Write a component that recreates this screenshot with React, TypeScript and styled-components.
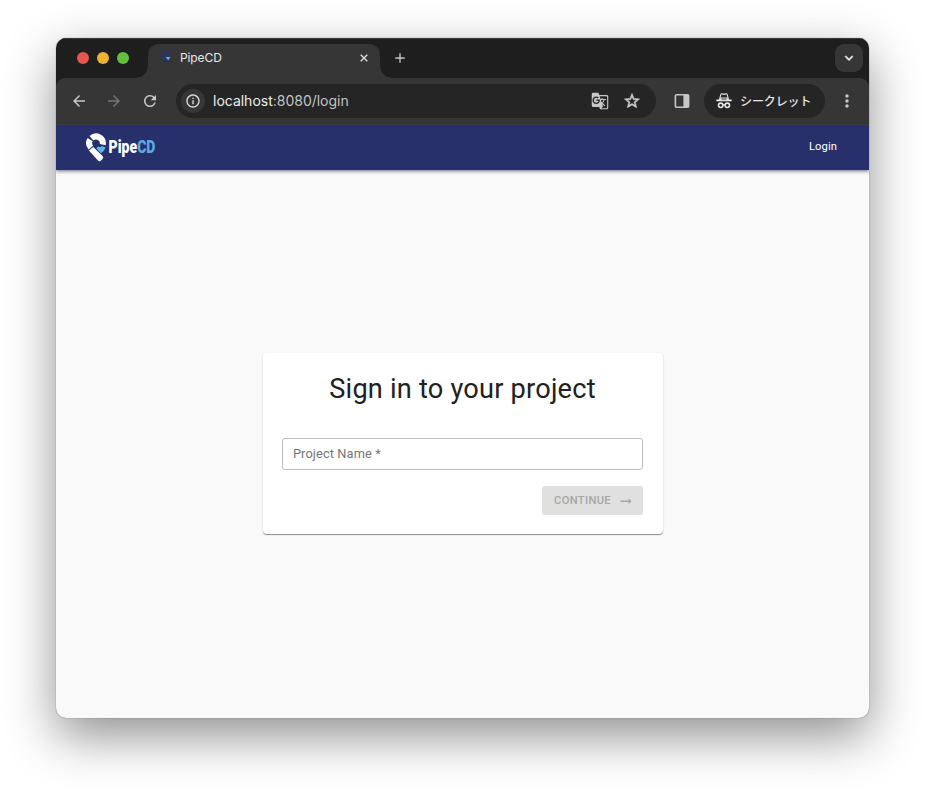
import React from "react";
import styled, { createGlobalStyle, css } from "styled-components";
import {
  MdArrowBack,
  MdArrowForward,
  MdRefresh,
  MdInfoOutline,
  MdGTranslate,
  MdStarBorder,
  MdMoreVert,
  MdClose,
  MdAdd,
  MdKeyboardArrowDown,
} from "react-icons/md";

const GlobalStyle = createGlobalStyle`
  *, *::before, *::after { box-sizing: border-box; }
  body { margin: 0; background: #fff; overflow: hidden; }
`;

const Desktop = styled.div`
  width: 925px;
  height: 792px;
  padding: 38px 56px 74px;
  overflow: hidden;
  background: #fff;
`;

const BrowserWindow = styled.div`
  width: 813px;
  height: 680px;
  display: flex;
  flex-direction: column;
  overflow: hidden;
  border-radius: 10px;
  background: #f9f9f9;
  box-shadow: 0 0 1px 0 rgba(0, 0, 0, 0.7), 0 18px 50px rgba(0, 0, 0, 0.44);
`;

const TabStrip = styled.div`
  height: 40px;
  flex: none;
  display: flex;
  align-items: flex-start;
  padding: 6px 6px 0 21px;
  background: #1e1e1e;
  box-shadow: inset 0 1px 0 #3a3a3a;
  font-family: Inter, sans-serif;
`;

const TrafficLights = styled.div`
  display: flex;
  gap: 8px;
  padding-top: 8px;
  margin-right: 19px;
`;

const Light = styled.span<{ $color: string }>`
  width: 12px;
  height: 12px;
  border-radius: 50%;
  background: ${(p) => p.$color};
`;

const Tab = styled.div`
  position: relative;
  width: 232px;
  height: 34px;
  display: flex;
  align-items: center;
  padding: 0 10px 6px 12px;
  border-radius: 10px 10px 0 0;
  background: #363636;
  color: #e6e6e6;
  font-size: 12px;

  &::before,
  &::after {
    content: "";
    position: absolute;
    bottom: 0;
    width: 12px;
    height: 12px;
  }
  &::before {
    left: -12px;
    background: radial-gradient(circle at 0 0, transparent 11.5px, #363636 12px);
  }
  &::after {
    right: -12px;
    background: radial-gradient(circle at 100% 0, transparent 11.5px, #363636 12px);
  }
`;

const TabTitle = styled.span`
  flex: 1;
  margin-left: 8px;
  padding-bottom: 1px;
  letter-spacing: -0.1px;
`;

const Glyph = styled.span<{ $size: number; $color?: string; $gap?: number }>`
  display: flex;
  flex: none;
  margin-left: ${(p) => p.$gap ?? 0}px;
  color: ${(p) => p.$color ?? "#c7c7c7"};
  svg {
    display: block;
    width: ${(p) => p.$size}px;
    height: ${(p) => p.$size}px;
  }
`;

const BoldGlyph = styled(Glyph)`
  path:not([fill="none"]) {
    stroke-width: 0.9px;
    stroke: currentColor;
  }
`;

const NewTab = styled.div`
  height: 28px;
  display: flex;
  align-items: center;
  margin-left: 12px;
`;

const TabSearch = styled.div`
  width: 28px;
  height: 28px;
  display: flex;
  align-items: center;
  justify-content: center;
  margin-left: auto;
  border-radius: 9px;
  background: #363636;
`;

const ToolbarBack = styled.div`
  flex: none;
  background: #1e1e1e;
`;

const Toolbar = styled.div`
  height: 47px;
  display: flex;
  align-items: center;
  padding: 0 12px 0 14px;
  border-bottom: 1px solid #41423d;
  border-radius: 9px 9px 0 0;
  background: #363636;
  font-family: Inter, sans-serif;
`;

const pill = css`
  height: 34px;
  flex: none;
  display: flex;
  align-items: center;
  border-radius: 17px;
  background: #252525;
`;

const AddressBar = styled.div`
  ${pill}
  width: 480px;
  margin-left: 17px;
  padding: 0 15px 0 5px;
`;

const SiteInfo = styled.span`
  width: 24px;
  height: 24px;
  display: flex;
  align-items: center;
  justify-content: center;
  border-radius: 50%;
  background: #363636;
`;

const Url = styled.span`
  flex: 1;
  margin-left: 8px;
  padding-bottom: 2px;
  color: #c4c4c4;
  font-size: 14px;
  letter-spacing: -0.01px;
  b {
    color: #ececec;
    font-weight: 400;
  }
`;

const Incognito = styled.div`
  ${pill}
  width: 121px;
  margin-left: 14px;
  padding-left: 12px;
  color: #e6e6e6;
  font-family: "Noto Sans CJK JP", sans-serif;
  font-size: 12px;
  font-weight: 500;
`;

const IncognitoLabel = styled.span`
  margin-left: 8px;
  padding-bottom: 2px;
  letter-spacing: -0.1px;
  white-space: nowrap;
`;

const AppBar = styled.header`
  position: relative;
  height: 45px;
  flex: none;
  display: flex;
  align-items: center;
  justify-content: space-between;
  padding: 0 32px 0 29px;
  background: #28306b;
  box-shadow: 0 1px 3px rgba(0, 0, 0, 0.35), 0 2px 4px rgba(0, 0, 0, 0.2);
`;

const Logo = styled.div`
  display: flex;
  align-items: center;
`;

const LoginLink = styled.a`
  margin-top: -2px;
  color: #fff;
  font-family: Roboto, sans-serif;
  font-size: 11.2px;
  letter-spacing: 0.1px;
`;

const Main = styled.main`
  flex: 1;
  display: flex;
  flex-direction: column;
  align-items: center;
  padding-top: 183px;
  font-family: Roboto, sans-serif;
`;

const Card = styled.section`
  width: 400px;
  height: 181px;
  display: flex;
  flex-direction: column;
  padding: 19px 20px 19px 19px;
  border-radius: 4px;
  background: #fff;
  box-shadow: 0 1px 0.5px rgba(0, 0, 0, 0.3), 0 1px 2px rgba(0, 0, 0, 0.18);
`;

const Title = styled.h1`
  margin: 0;
  padding-left: 1px;
  height: 34px;
  color: #212121;
  font-size: 27.2px;
  font-weight: 400;
  line-height: 34px;
  letter-spacing: 0.2px;
  text-align: center;
  white-space: nowrap;
`;

const Field = styled.div`
  height: 32px;
  display: flex;
  align-items: center;
  margin-top: 32px;
  padding: 0 10.4px 1px;
  border: 1px solid #bdbdbd;
  border-radius: 3px;
  color: #757575;
  font-size: 12.8px;
  letter-spacing: 0.12px;
`;

const ContinueButton = styled.button`
  width: 101px;
  height: 29px;
  display: flex;
  align-items: center;
  align-self: flex-end;
  margin-top: 16px;
  padding: 0 11px 0 12.6px;
  border: 0;
  border-radius: 3px;
  background: #e0e0e0;
  color: #a6a6a6;
  font-family: Roboto, sans-serif;
  font-size: 11.2px;
  font-weight: 500;
  letter-spacing: 0.32px;
  svg {
    margin-left: auto;
  }
`;

function PipeLogo() {
  return (
    <Logo aria-label="PipeCD">
      <svg width="22" height="30" viewBox="0 0 22 30" fill="none">
        <g stroke="#fff" strokeWidth="6">
          <path d="M6.5 5.2 A6.8 6.8 0 0 1 17.7 11.6" />
          <path d="M5.2 6.6 A6.8 6.8 0 0 0 5.8 14.6" />
        </g>
        <path
          d="M3.9 17.6 L8.2 14 L17.6 23 Q18.9 24.4 17.7 25.8 L15.6 27.7 Q14.3 28.8 13 27.5 Z"
          fill="#fff"
        />
        <path d="M11.2 15.2 L13.3 13.4 L15.2 14.3 L16.8 12.9 L20.6 14.4 Q19.4 18 15.9 20.2 Z" fill="#5db5e8" />
      </svg>
      <svg width="50" height="30" viewBox="0 0 50 30">
        <text x="1.6" y="20" fontFamily="Roboto, sans-serif" fontWeight="900" fontSize="18.2" fill="#fff" textLength="46.8" lengthAdjust="spacingAndGlyphs">
          Pipe<tspan fill="#55ade3">CD</tspan>
        </text>
      </svg>
    </Logo>
  );
}

function Favicon() {
  return (
    <svg width="12" height="14" viewBox="0 0 22 28" fill="none">
      <path d="M17.5 10 A6.8 6.8 0 1 0 5.5 14 L14 24" stroke="#28316f" strokeWidth="5" />
      <path d="M10 12 L20 12 L15.5 18.5 Z" fill="#5db5e8" />
    </svg>
  );
}

function SidePanelIcon() {
  return (
    <svg viewBox="0 0 16 16" fill="none">
      <rect x="1.4" y="1.7" width="13.2" height="12.6" rx="1" stroke="currentColor" strokeWidth="1.6" />
      <rect x="9.4" y="1.7" width="5.2" height="12.6" fill="currentColor" />
    </svg>
  );
}

function IncognitoIcon() {
  return (
    <svg viewBox="0 0 16 16" fill="none" stroke="currentColor">
      <path
        d="M3.4 6.9 L4.7 1.9 Q5 0.5 6.3 0.9 L8 1.4 L9.7 0.9 Q11 0.5 11.3 1.9 L12.6 6.9 L11.2 6.9 L10.9 5 H5.1 L4.8 6.9 Z"
        strokeWidth="1.1"
      />
      <path d="M0.3 7.4 H15.7" strokeWidth="1.7" />
      <circle cx="4.7" cy="12.3" r="2.2" strokeWidth="1.6" />
      <circle cx="11.3" cy="12.3" r="2.2" strokeWidth="1.6" />
      <path d="M6.7 12 Q8 11.2 9.3 12" strokeWidth="1.4" />
    </svg>
  );
}

export default function App() {
  return (
    <>
      <GlobalStyle />
      <Desktop>
        <BrowserWindow>
          <TabStrip>
            <TrafficLights>
              <Light $color="#e3574f" />
              <Light $color="#eeb233" />
              <Light $color="#62c03c" />
            </TrafficLights>
            <Tab>
              <Favicon />
              <TabTitle>PipeCD</TabTitle>
              <BoldGlyph $size={12} $color="#e0e0e0"><MdClose /></BoldGlyph>
            </Tab>
            <NewTab>
              <Glyph $size={16}><MdAdd /></Glyph>
            </NewTab>
            <TabSearch>
              <BoldGlyph $size={16} $color="#e6e6e6"><MdKeyboardArrowDown /></BoldGlyph>
            </TabSearch>
          </TabStrip>
          <ToolbarBack>
            <Toolbar>
              <Glyph $size={18}><MdArrowBack /></Glyph>
              <Glyph $size={18} $gap={17} $color="#757575"><MdArrowForward /></Glyph>
              <Glyph $size={18} $gap={18}><MdRefresh /></Glyph>
              <AddressBar>
                <SiteInfo>
                  <Glyph $size={16} $color="#dedede"><MdInfoOutline /></Glyph>
                </SiteInfo>
                <Url><b>localhost</b>:8080/login</Url>
                <Glyph $size={18}><MdGTranslate /></Glyph>
                <BoldGlyph $size={18} $gap={14}><MdStarBorder /></BoldGlyph>
              </AddressBar>
              <Glyph $size={16} $gap={18}><SidePanelIcon /></Glyph>
              <Incognito>
                <Glyph $size={16} $color="#e6e6e6"><IncognitoIcon /></Glyph>
                <IncognitoLabel>シークレット</IncognitoLabel>
              </Incognito>
              <Glyph $size={20} $gap={12}><MdMoreVert /></Glyph>
            </Toolbar>
          </ToolbarBack>
          <AppBar>
            <PipeLogo />
            <LoginLink>Login</LoginLink>
          </AppBar>
          <Main>
            <Card>
              <Title>Sign in to your project</Title>
              <Field>Project Name *</Field>
              <ContinueButton disabled>
                CONTINUE
                <svg width="12" height="8" viewBox="0 0 12 8">
                  <path d="M0.5 3.5 H8.6 V1.4 L11.6 4.2 L8.6 7 V4.9 H0.5 Z" fill="#a6a6a6" />
                </svg>
              </ContinueButton>
            </Card>
          </Main>
        </BrowserWindow>
      </Desktop>
    </>
  );
}
